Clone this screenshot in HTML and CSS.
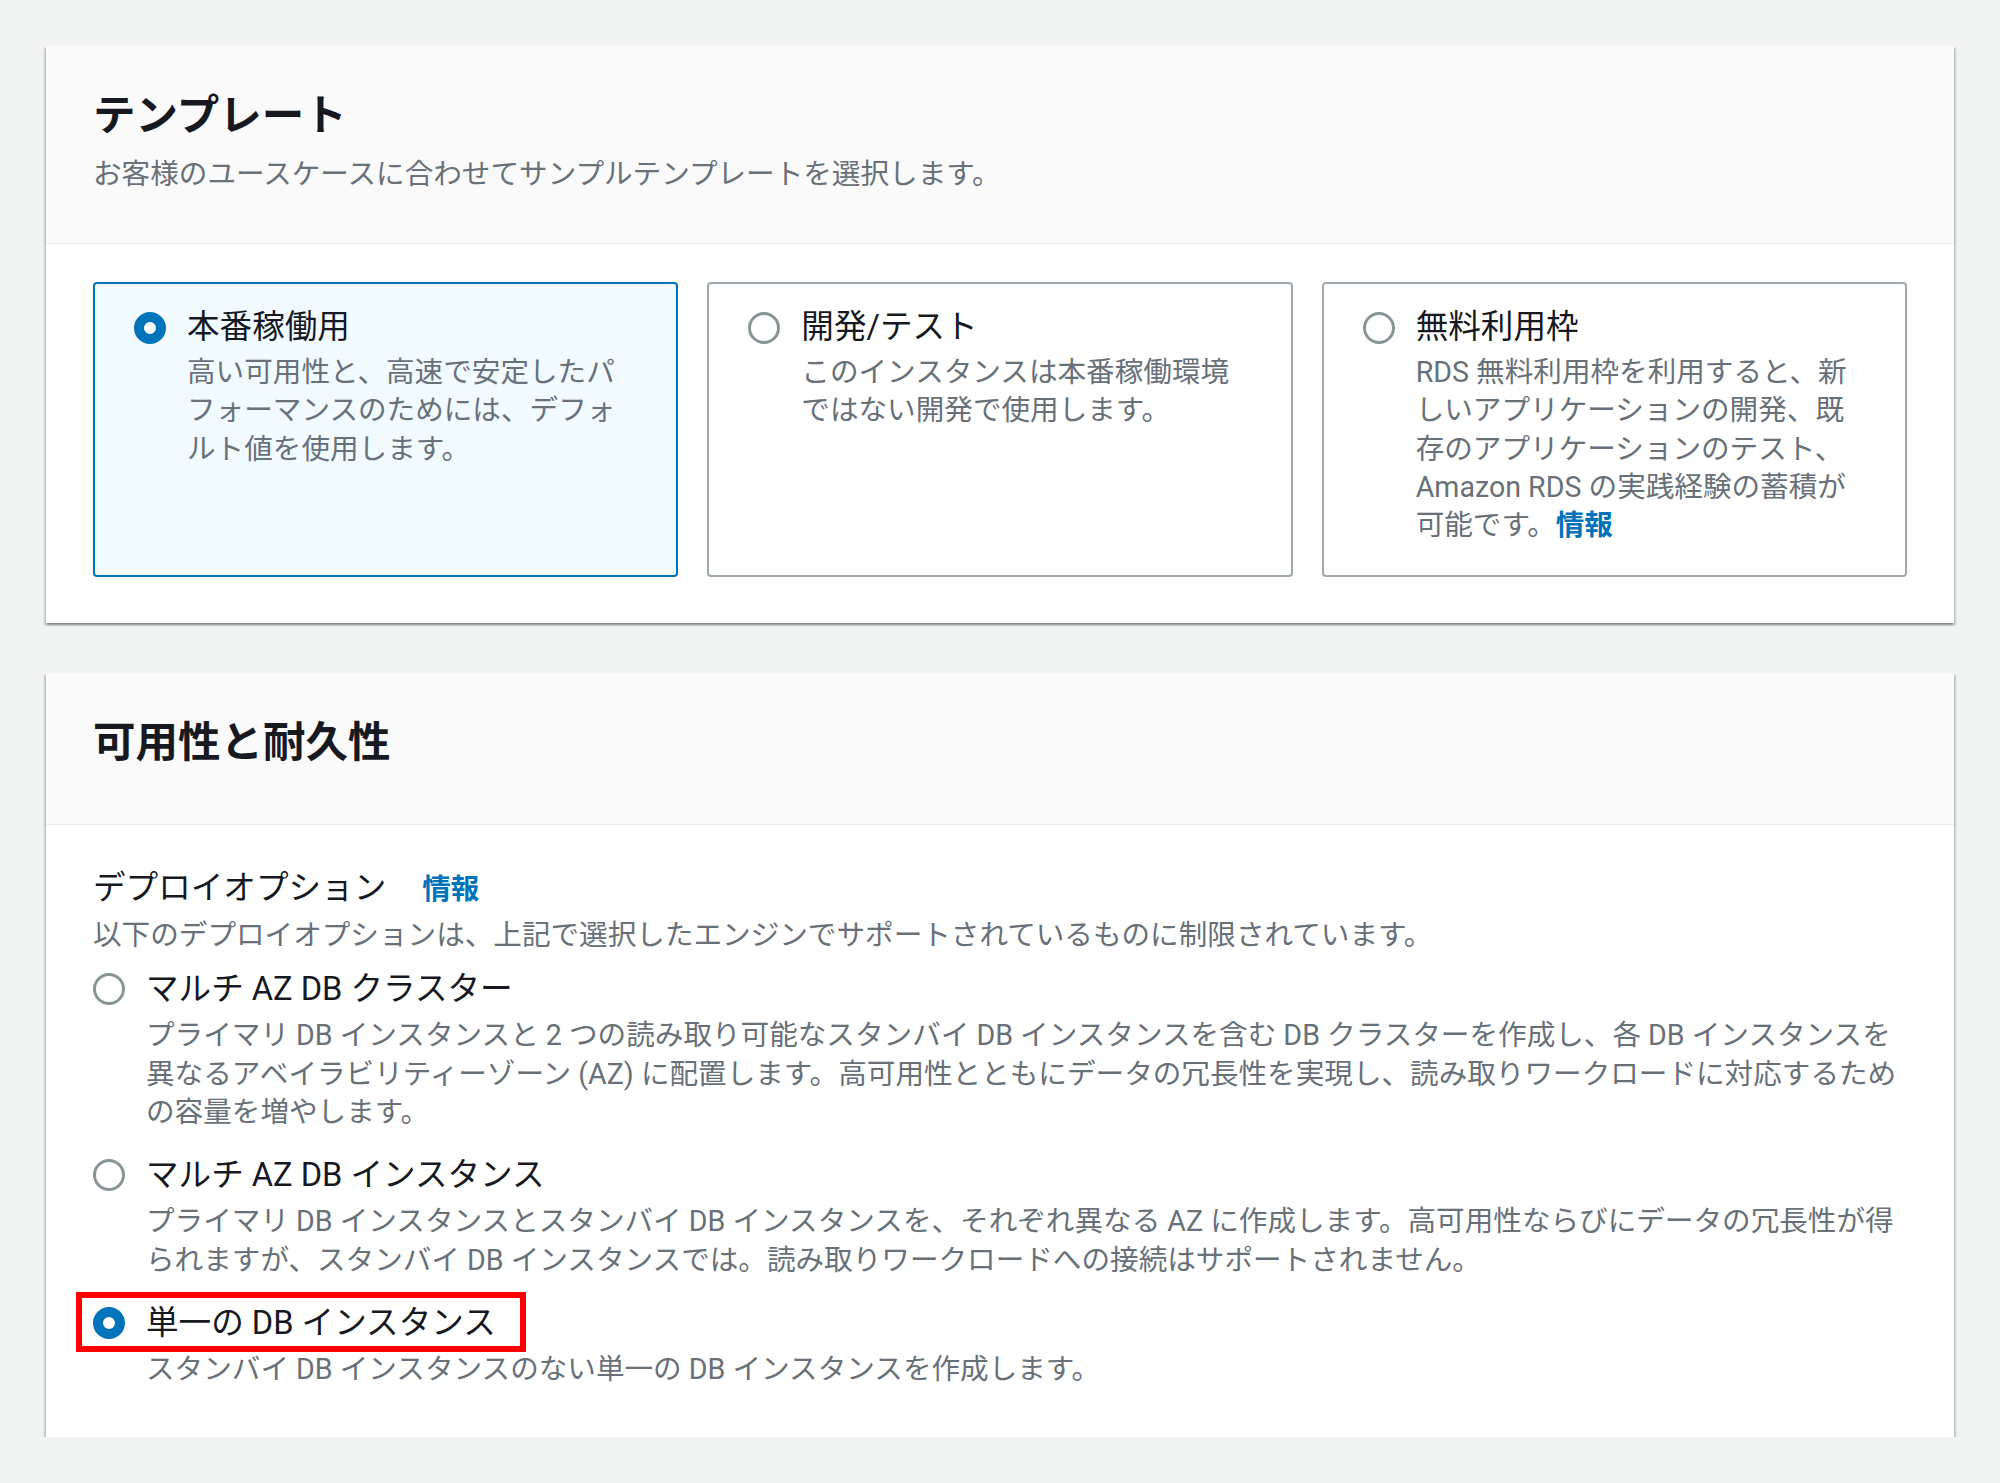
FILE: index.html
```html
<!DOCTYPE html>
<html lang="ja">
	<head>
		<meta charset="UTF-8">
		<title>テンプレート / 可用性と耐久性</title>
		<link rel="stylesheet" href="styles.css">
	</head>
	<body>
		<div class="page">

			<!-- テンプレート -->
			<section class="container">
				<header class="container-header">
					<h2>テンプレート</h2>
					<p class="header-desc">お客様のユースケースに合わせてサンプルテンプレートを選択します。</p>
				</header>
				<div class="container-body tiles-body">
					<div class="tiles">
						<label class="tile tile-selected">
							<span class="radio radio-checked"></span>
							<span class="tile-text">
								<span class="tile-title">本番稼働用</span>
								<span class="tile-desc">高い可用性と、高速で安定したパフォーマンスのためには、デフォルト値を使用します。</span>
							</span>
						</label>
						<label class="tile">
							<span class="radio"></span>
							<span class="tile-text">
								<span class="tile-title">開発/テスト</span>
								<span class="tile-desc">このインスタンスは本番稼働環境ではない開発で使用します。</span>
							</span>
						</label>
						<label class="tile">
							<span class="radio"></span>
							<span class="tile-text">
								<span class="tile-title">無料利用枠</span>
								<span class="tile-desc">RDS 無料利用枠を利用すると、新しいアプリケーションの開発、既存のアプリケーションのテスト、Amazon RDS の実践経験の蓄積が可能です。<a class="info" href="#">情報</a></span>
							</span>
						</label>
					</div>
				</div>
			</section>

			<!-- 可用性と耐久性 -->
			<section class="container">
				<header class="container-header">
					<h2>可用性と耐久性</h2>
				</header>
				<div class="container-body options-body">
					<div class="field-label">デプロイオプション<a class="info info-label" href="#">情報</a></div>
					<p class="field-desc">以下のデプロイオプションは、上記で選択したエンジンでサポートされているものに制限されています。</p>

					<div class="options">
						<div class="option">
							<div class="option-head">
								<span class="radio"></span>
								<span class="option-title">マルチ AZ DB クラスター</span>
							</div>
							<p class="option-desc">プライマリ DB インスタンスと 2 つの読み取り可能なスタンバイ DB インスタンスを含む DB クラスターを作成し、各 DB インスタンスを異なるアベイラビリティーゾーン (AZ) に配置します。高可用性とともにデータの冗長性を実現し、読み取りワークロードに対応するための容量を増やします。</p>
						</div>
						<div class="option">
							<div class="option-head">
								<span class="radio"></span>
								<span class="option-title">マルチ AZ DB インスタンス</span>
							</div>
							<p class="option-desc">プライマリ DB インスタンスとスタンバイ DB インスタンスを、それぞれ異なる AZ に作成します。高可用性ならびにデータの冗長性が得られますが、スタンバイ DB インスタンスでは。読み取りワークロードへの接続はサポートされません。</p>
						</div>
						<div class="option">
							<div class="option-head marked">
								<span class="radio radio-checked"></span>
								<span class="option-title">単一の DB インスタンス</span>
							</div>
							<p class="option-desc">スタンバイ DB インスタンスのない単一の DB インスタンスを作成します。</p>
						</div>
					</div>
				</div>
			</section>

		</div>
	</body>
</html>
```

FILE: styles.css
```css
* {
	margin: 0;
	padding: 0;
	box-sizing: border-box;
}

body {
	background: #f2f3f3;
	font-family: Roboto, "Noto Sans CJK JP", sans-serif;
	font-size: 28.6px;
	line-height: 38px;
	color: #16191f;
}

a {
	text-decoration: none;
}

.page {
	display: flex;
	flex-direction: column;
	gap: 50px;
	padding: 46px 46px 0;
}

/* container */
.container {
	background: white;
	box-shadow: 0 2px 2px 0 rgba(0, 28, 36, .3), 2px 2px 2px 0 rgba(0, 28, 36, .15), -2px 2px 2px 0 rgba(0, 28, 36, .15);
}

.container-header {
	background: #fafafa;
	border-bottom: 1px solid #e9ebed;
	padding: 42px 47px 50px;
}

.container-header h2 {
	font-size: 42.5px;
	line-height: 56px;
	font-weight: bold;
}

.container-header h2:only-child {
	margin-bottom: 3px;
}

.header-desc {
	margin-top: 11px;
	color: #687078;
}

.tiles-body {
	padding: 38px 47px 46px;
}

.options-body {
	padding: 41px 47px 49px;
}

/* radio */
.radio {
	flex: none;
	width: 32px;
	height: 32px;
	margin-top: 6px;
	border: 3px solid #879596;
	border-radius: 50%;
	background: white;
}

.radio-checked {
	border: 10px solid #0073bb;
}

/* tiles */
.tiles {
	display: grid;
	grid-template-columns: repeat(3, 1fr);
	gap: 29px;
}

.tile {
	display: flex;
	gap: 21px;
	padding: 21px 52px 31px 39px;
	border: 2px solid #a0aaae;
	border-radius: 4px;
	background: white;
}

.tile .radio {
	margin-top: 7px;
}

.tile-selected {
	border-color: #0073bb;
	background: #f1faff;
}

.tile-text {
	display: flex;
	flex-direction: column;
}

.tile-title {
	font-size: 32.6px;
	line-height: 44px;
}

.tile-desc {
	margin-top: 4px;
	line-height: 38.3px;
	color: #687078;
}

.info {
	color: #0073bb;
	font-weight: bold;
}

/* deploy options */
.field-label {
	font-size: 32.6px;
	line-height: 44px;
}

.info-label {
	font-size: 28.6px;
	margin-left: 36px;
}

.field-desc {
	margin-top: 5px;
	color: #687078;
}

.options {
	display: flex;
	flex-direction: column;
	gap: 22px;
	margin-top: 13px;
}

.option-head {
	display: flex;
	gap: 21px;
}

.option-title {
	font-size: 32.6px;
	line-height: 44px;
}

.option-desc {
	margin-top: 5px;
	padding-left: 53px;
	line-height: 38.3px;
	color: #687078;
}

/* red annotation box */
.marked {
	position: relative;
	width: fit-content;
}

.marked::after {
	content: "";
	position: absolute;
	top: -9px;
	bottom: -7px;
	left: -17px;
	right: -30px;
	border: 6px solid #ff0000;
}
```
